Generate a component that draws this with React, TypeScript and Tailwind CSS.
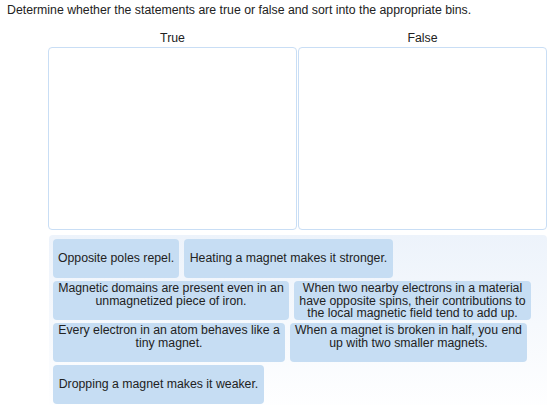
import React from "react";

type Card = { text: string; w: number; multi?: boolean };

const rows: Card[][] = [
  [
    { text: "Opposite poles repel.", w: 126 },
    { text: "Heating a magnet makes it stronger.", w: 209 },
  ],
  [
    { text: "Magnetic domains are present even in an unmagnetized piece of iron.", w: 236, multi: true },
    { text: "When two nearby electrons in a material have opposite spins, their contributions to the local magnetic field tend to add up.", w: 237, multi: true },
  ],
  [
    { text: "Every electron in an atom behaves like a tiny magnet.", w: 232, multi: true },
    { text: "When a magnet is broken in half, you end up with two smaller magnets.", w: 237, multi: true },
  ],
  [{ text: "Dropping a magnet makes it weaker.", w: 211 }],
];

export default function App() {
  return (
    <div
      className="w-[560px] h-[405px] overflow-hidden bg-white text-[#222] text-[12.3px]"
      style={{ fontFamily: '"Liberation Sans", Arial, sans-serif' }}
    >
      <div className="pl-[7px] pt-[3px] leading-[14px]">
        Determine whether the statements are true or false and sort into the appropriate bins.
      </div>
      <div className="ml-[48px] mt-[14px] w-[499px]">
        <div className="grid grid-cols-2 gap-x-[1px]">
          <div className="text-center leading-[14px]">True</div>
          <div className="text-center leading-[14px]">False</div>
        </div>
        <div className="grid grid-cols-2 gap-x-[1px] mt-[2px]">
          <div className="h-[183px] rounded-[4px] border border-[#c9def5] bg-white"></div>
          <div className="h-[183px] rounded-[4px] border border-[#c9def5] bg-white"></div>
        </div>
        <div className="mt-[5px] ml-[1px] w-[498px] h-[180px] rounded-t-[4px] bg-gradient-to-b from-[#edf3fb] to-[#ffffff] pl-[4px] pt-[4px] flex flex-col gap-y-[3px]">
          {rows.map((row, i) => (
            <div key={i} className="flex gap-x-[5px]">
              {row.map((c, j) => (
                <div
                  key={j}
                  style={{ width: c.w }}
                  className={
                    "h-[39px] rounded-[4px] bg-[#c6ddf3] px-[4px] text-center leading-[12.5px] flex justify-center " +
                    (c.multi ? "items-start pt-[1px]" : "items-center")
                  }
                >
                  <span>{c.text}</span>
                </div>
              ))}
            </div>
          ))}
        </div>
      </div>
    </div>
  );
}
